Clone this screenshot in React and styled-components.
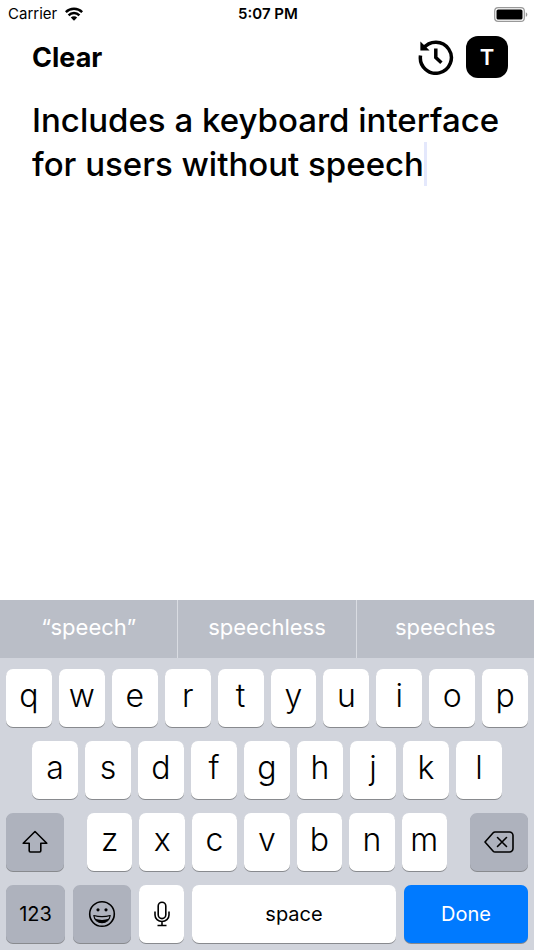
import { useState } from 'react';
import styled, { createGlobalStyle } from 'styled-components';

const GlobalStyle = createGlobalStyle`
  * {
    box-sizing: border-box;
  }

  body {
    margin: 0;
    background: #fff;
    color: #000;
    font-family: Inter, "Liberation Sans", sans-serif;
  }

  button,
  textarea {
    margin: 0;
    padding: 0;
    border: 0;
    background: none;
    color: inherit;
    font: inherit;
  }

  svg {
    display: block;
  }
`;

const Screen = styled.div`
  display: flex;
  flex-direction: column;
  min-height: 100vh;
`;

const StatusBar = styled.div`
  display: grid;
  grid-template-columns: 1fr auto 1fr;
  align-items: center;
  height: 28px;
  padding: 0 6px 0 8px;
  font-size: 15px;
  line-height: 20px;
`;

const Carrier = styled.div`
  display: flex;
  align-items: center;
  gap: 8px;
`;

const Time = styled.div`
  font-weight: 600;
`;

const Battery = styled.div`
  justify-self: end;
`;

const Toolbar = styled.header`
  display: flex;
  align-items: center;
  justify-content: space-between;
  height: 58px;
  padding: 0 26px 0 32px;
`;

const ClearButton = styled.button`
  padding-top: 2px;
  font-size: 27px;
  font-weight: 700;
  line-height: 32px;
`;

const Actions = styled.div`
  display: flex;
  align-items: center;
  gap: 12px;
`;

const TextButton = styled.button`
  width: 42px;
  height: 42px;
  border-radius: 12px;
  background: #000;
  color: #fff;
  font-size: 22px;
  font-weight: 600;
`;

const Message = styled.main`
  display: grid;
  flex: 1;
  padding: 12px 28px 0 32px;
  font-size: 33px;
  font-weight: 500;
  line-height: 44px;
`;

const MessageInput = styled.textarea`
  grid-area: 1 / 1;
  width: 100%;
  resize: none;
  outline: none;
  overflow: hidden;
  caret-color: transparent;
`;

const CaretLayer = styled.div`
  grid-area: 1 / 1;
  color: transparent;
  white-space: pre-wrap;
  pointer-events: none;
`;

const Caret = styled.span`
  display: inline-block;
  width: 3px;
  height: 44px;
  margin-right: -3px;
  background: #e4e8fc;
  vertical-align: top;
`;

const Suggestions = styled.div`
  display: grid;
  grid-template-columns: repeat(3, 1fr);
  gap: 1px;
  background: #d9dce2;
`;

const Suggestion = styled.button`
  height: 58px;
  padding-bottom: 4px;
  background: #babec7;
  color: #fff;
  font-size: 22px;
`;

const Keyboard = styled.div`
  display: flex;
  flex-direction: column;
  gap: 14px;
  padding: 11px 6px 7px;
  background: #d1d4dc;
`;

const Row = styled.div`
  display: flex;
  gap: ${({ $gap }) => $gap || 7}px;
  padding: 0 ${({ $inset }) => $inset || 0}px;
`;

const Letters = styled.div`
  display: flex;
  flex: 1;
  gap: 7px;
`;

const keyColors = {
  light: '#fff',
  dark: '#aeb2bd',
  blue: '#007aff',
};

const Key = styled.button`
  display: flex;
  align-items: center;
  justify-content: center;
  flex: ${({ $width }) => ($width ? `0 0 ${$width}px` : '1 1 0')};
  min-width: 0;
  height: 58px;
  border-radius: 7px;
  background: ${({ $tone }) => keyColors[$tone || 'light']};
  box-shadow: 0 1px 0 #888a8e;
  color: ${({ $tone }) => ($tone === 'blue' ? '#fff' : '#000')};
  font-size: 20px;
`;

const LetterKey = styled(Key)`
  padding-bottom: 6px;
  font-size: 32px;
  font-weight: 300;
`;

function WifiIcon() {
  return (
    <svg width="18" height="14" viewBox="0 0 18 14" fill="none" stroke="#000" strokeWidth="2.5" aria-hidden="true">
      <path d="M0.8 5.1a11.6 11.6 0 0 1 16.4 0" />
      <path d="M3.6 8.3a7.6 7.6 0 0 1 10.8 0" />
      <path d="M5.8 10.6a4.5 4.5 0 0 1 6.4 0L9 13.8z" fill="#000" stroke="none" />
    </svg>
  );
}

function BatteryIcon() {
  return (
    <svg width="34" height="15" viewBox="0 0 34 15" aria-hidden="true">
      <rect x="0.7" y="0.7" width="29.6" height="13.6" rx="3.4" fill="none" stroke="#999" strokeWidth="1.2" />
      <rect x="2.5" y="2.5" width="26" height="10" rx="1.6" />
      <path d="M31.8 5.2c2 .8 2 3.8 0 4.6z" fill="#999" />
    </svg>
  );
}

function HistoryIcon() {
  return (
    <svg width="36" height="36" viewBox="0 0 36 36" fill="none" stroke="#000" strokeWidth="3.5" aria-hidden="true">
      <path d="M5.2 9.8A15.5 15.5 0 1 1 2.5 16.6" />
      <path d="M2.4 2.6v8.8h9.2z" fill="#000" stroke="none" />
      <path d="M17.8 9.6v9l5.6 5.2" />
    </svg>
  );
}

function ShiftIcon() {
  return (
    <svg width="26" height="24" viewBox="0 0 26 24" fill="none" stroke="#000" strokeWidth="1.6" strokeLinejoin="round" aria-hidden="true">
      <path d="M13 1.5L1.2 13.2H7.2V20.8a1.2 1.2 0 0 0 1.2 1.2h9.2a1.2 1.2 0 0 0 1.2-1.2V13.2h6z" />
    </svg>
  );
}

function DeleteIcon() {
  return (
    <svg width="30" height="22" viewBox="0 0 30 22" fill="none" stroke="#000" strokeWidth="1.6" strokeLinejoin="round" strokeLinecap="round" aria-hidden="true">
      <path d="M11 1h14.5a3.5 3.5 0 0 1 3.5 3.5v13a3.5 3.5 0 0 1-3.5 3.5H11a2.5 2.5 0 0 1-1.8-.8L1 11l8.2-9.2A2.5 2.5 0 0 1 11 1z" />
      <path d="M13.5 6.5l9 9M22.5 6.5l-9 9" />
    </svg>
  );
}

function SmileyIcon() {
  return (
    <svg width="28" height="28" viewBox="0 0 28 28" fill="none" stroke="#000" strokeWidth="1.6" aria-hidden="true">
      <circle cx="14" cy="14" r="12.3" />
      <circle cx="10" cy="9.8" r="1.6" fill="#000" stroke="none" />
      <circle cx="18" cy="9.8" r="1.6" fill="#000" stroke="none" />
      <path d="M5.8 15.5c5 1.4 11.4 1.4 16.4 0c-.6 4.5-4 7.2-8.2 7.2s-7.6-2.7-8.2-7.2z" strokeWidth="1.2" strokeLinejoin="round" />
      <path d="M7 18.8c4.5 1.5 9.5 1.5 14 0c-1.4 2.6-4 3.9-7 3.9s-5.6-1.3-7-3.9z" fill="#000" stroke="none" />
    </svg>
  );
}

function MicIcon() {
  return (
    <svg width="16" height="26" viewBox="0 0 16 26" fill="none" stroke="#000" strokeWidth="1.6" aria-hidden="true">
      <rect x="4.2" y="1.2" width="7.6" height="16.4" rx="3.8" />
      <path d="M1 10.5v3.5a7 6.5 0 0 0 14 0v-3.5M8 20.5v4M3.5 24.5h9" />
    </svg>
  );
}

const suggestions = ['“speech”', 'speechless', 'speeches'];

export default function App() {
  const [message, setMessage] = useState('Includes a keyboard interface for users without speech');

  const type = (text) => setMessage((current) => current + text);
  const complete = (word) =>
    setMessage((current) => current.replace(/\S*$/, word.replace(/[“”]/g, '')));

  const renderLetters = (letters) =>
    letters.split('').map((letter) => (
      <LetterKey key={letter} type="button" onClick={() => type(letter)}>
        {letter}
      </LetterKey>
    ));

  return (
    <Screen>
      <GlobalStyle />

      <StatusBar>
        <Carrier>
          Carrier
          <WifiIcon />
        </Carrier>
        <Time>5:07 PM</Time>
        <Battery>
          <BatteryIcon />
        </Battery>
      </StatusBar>

      <Toolbar>
        <ClearButton type="button" onClick={() => setMessage('')}>
          Clear
        </ClearButton>
        <Actions>
          <button type="button" aria-label="History">
            <HistoryIcon />
          </button>
          <TextButton type="button">T</TextButton>
        </Actions>
      </Toolbar>

      <Message>
        <MessageInput
          aria-label="Message"
          spellCheck={false}
          value={message}
          onChange={(event) => setMessage(event.target.value)}
        />
        <CaretLayer aria-hidden="true">
          {message}
          <Caret />
        </CaretLayer>
      </Message>

      <Suggestions>
        {suggestions.map((word) => (
          <Suggestion key={word} type="button" onClick={() => complete(word)}>
            {word}
          </Suggestion>
        ))}
      </Suggestions>

      <Keyboard>
        <Row>{renderLetters('qwertyuiop')}</Row>
        <Row $inset={26}>{renderLetters('asdfghjkl')}</Row>
        <Row $gap={23}>
          <Key type="button" $tone="dark" $width={58} aria-label="Shift">
            <ShiftIcon />
          </Key>
          <Letters>{renderLetters('zxcvbnm')}</Letters>
          <Key
            type="button"
            $tone="dark"
            $width={58}
            aria-label="Delete"
            onClick={() => setMessage((current) => current.slice(0, -1))}
          >
            <DeleteIcon />
          </Key>
        </Row>
        <Row $gap={8}>
          <Key type="button" $tone="dark" $width={59}>
            123
          </Key>
          <Key type="button" $tone="dark" $width={58} aria-label="Emoji">
            <SmileyIcon />
          </Key>
          <Key type="button" $width={45} aria-label="Dictate">
            <MicIcon />
          </Key>
          <Key type="button" onClick={() => type(' ')}>
            space
          </Key>
          <Key type="button" $tone="blue" $width={124}>
            Done
          </Key>
        </Row>
      </Keyboard>
    </Screen>
  );
}
